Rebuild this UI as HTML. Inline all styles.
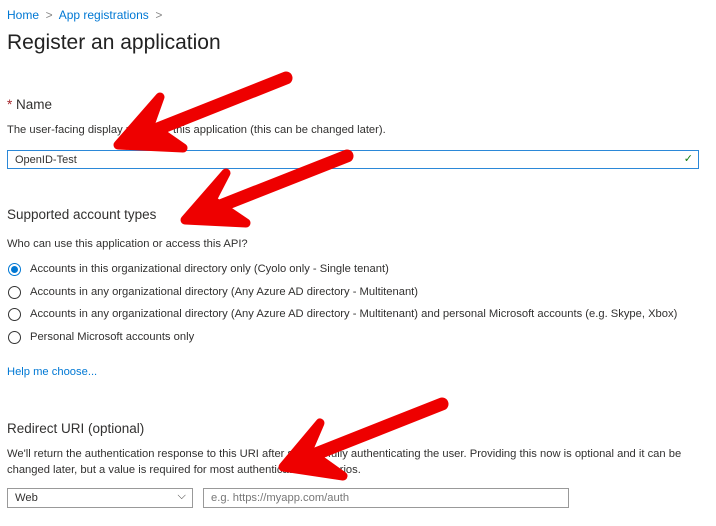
<!DOCTYPE html>
<html><head><meta charset="utf-8"><style>
body{margin:0;width:716px;height:526px;background:#fff;font-family:"Liberation Sans",sans-serif;color:#323130;position:relative;overflow:hidden}
.a{position:absolute;white-space:nowrap}
.s{font-size:11.2px}
.r{width:13px;height:13px;border:1px solid #333;border-radius:50%;box-sizing:border-box;position:absolute;left:8px}
</style></head><body>
<div class="a" style="left:7px;top:8px;font-size:12px;color:#0078d4">Home <span style="color:#888">&nbsp;&gt;&nbsp;</span> App registrations <span style="color:#888">&nbsp;&gt;</span></div>
<div class="a" style="left:7px;top:31px;font-size:21px;color:#222">Register an application</div>
<div class="a" style="left:7px;top:97px;font-size:13.5px"><span style="color:#a4262c">*</span> Name</div>
<div class="a s" style="left:7px;top:124px">The user-facing display name for this application (this can be changed later).</div>
<div class="a" style="left:7px;top:150px;width:692px;height:19px;border:1px solid #2b88d8;box-sizing:border-box;font-size:11px;padding:3px 7px">OpenID-Test<span style="position:absolute;right:5px;top:1px;color:#107c10">✓</span></div>
<div class="a" style="left:7px;top:207px;font-size:13.5px">Supported account types</div>
<div class="a s" style="left:7px;top:238px">Who can use this application or access this API?</div>
<div class="r" style="top:263px;border-color:#0078d4"><div style="width:7px;height:7px;background:#0078d4;border-radius:50%;margin:2px"></div></div>
<div class="a s" style="left:30px;top:263px">Accounts in this organizational directory only (Cyolo only - Single tenant)</div>
<div class="r" style="top:286px"></div><div class="a s" style="left:30px;top:286px">Accounts in any organizational directory (Any Azure AD directory - Multitenant)</div>
<div class="r" style="top:308px"></div><div class="a s" style="left:30px;top:308px">Accounts in any organizational directory (Any Azure AD directory - Multitenant) and personal Microsoft accounts (e.g. Skype, Xbox)</div>
<div class="r" style="top:331px"></div><div class="a s" style="left:30px;top:331px">Personal Microsoft accounts only</div>
<div class="a s" style="left:7px;top:366px;color:#0078d4">Help me choose...</div>
<div class="a" style="left:7px;top:421px;font-size:13.5px">Redirect URI (optional)</div>
<div class="a s" style="left:7px;top:446px;line-height:16px">We'll return the authentication response to this URI after successfully authenticating the user. Providing this now is optional and it can be<br>changed later, but a value is required for most authentication scenarios.</div>
<div class="a s" style="left:7px;top:488px;width:186px;height:20px;border:1px solid #999;box-sizing:border-box;padding:3px 7px">Web<span style="position:absolute;right:6px;top:1px">⌵</span></div>
<div class="a s" style="left:203px;top:488px;width:366px;height:20px;border:1px solid #999;box-sizing:border-box;padding:3px 7px;color:#777">e.g. https://myapp.com/auth</div>
<svg width="716" height="526" style="position:absolute;left:0;top:0" stroke="#e00" fill="#e00" stroke-linecap="round" stroke-linejoin="round">
<g stroke-width="13" fill="none"><path d="M286 78L140 136"/><path d="M347 156L205 212"/><path d="M442 404L303 459"/></g>
<g stroke-width="9"><path d="M160 97L118 145L183 148L150 125Z"/><path d="M226 173L185 220L246 223L212 200Z"/><path d="M320 423L283 467L343 476L308 451Z"/></g>
</svg>
</body></html>
